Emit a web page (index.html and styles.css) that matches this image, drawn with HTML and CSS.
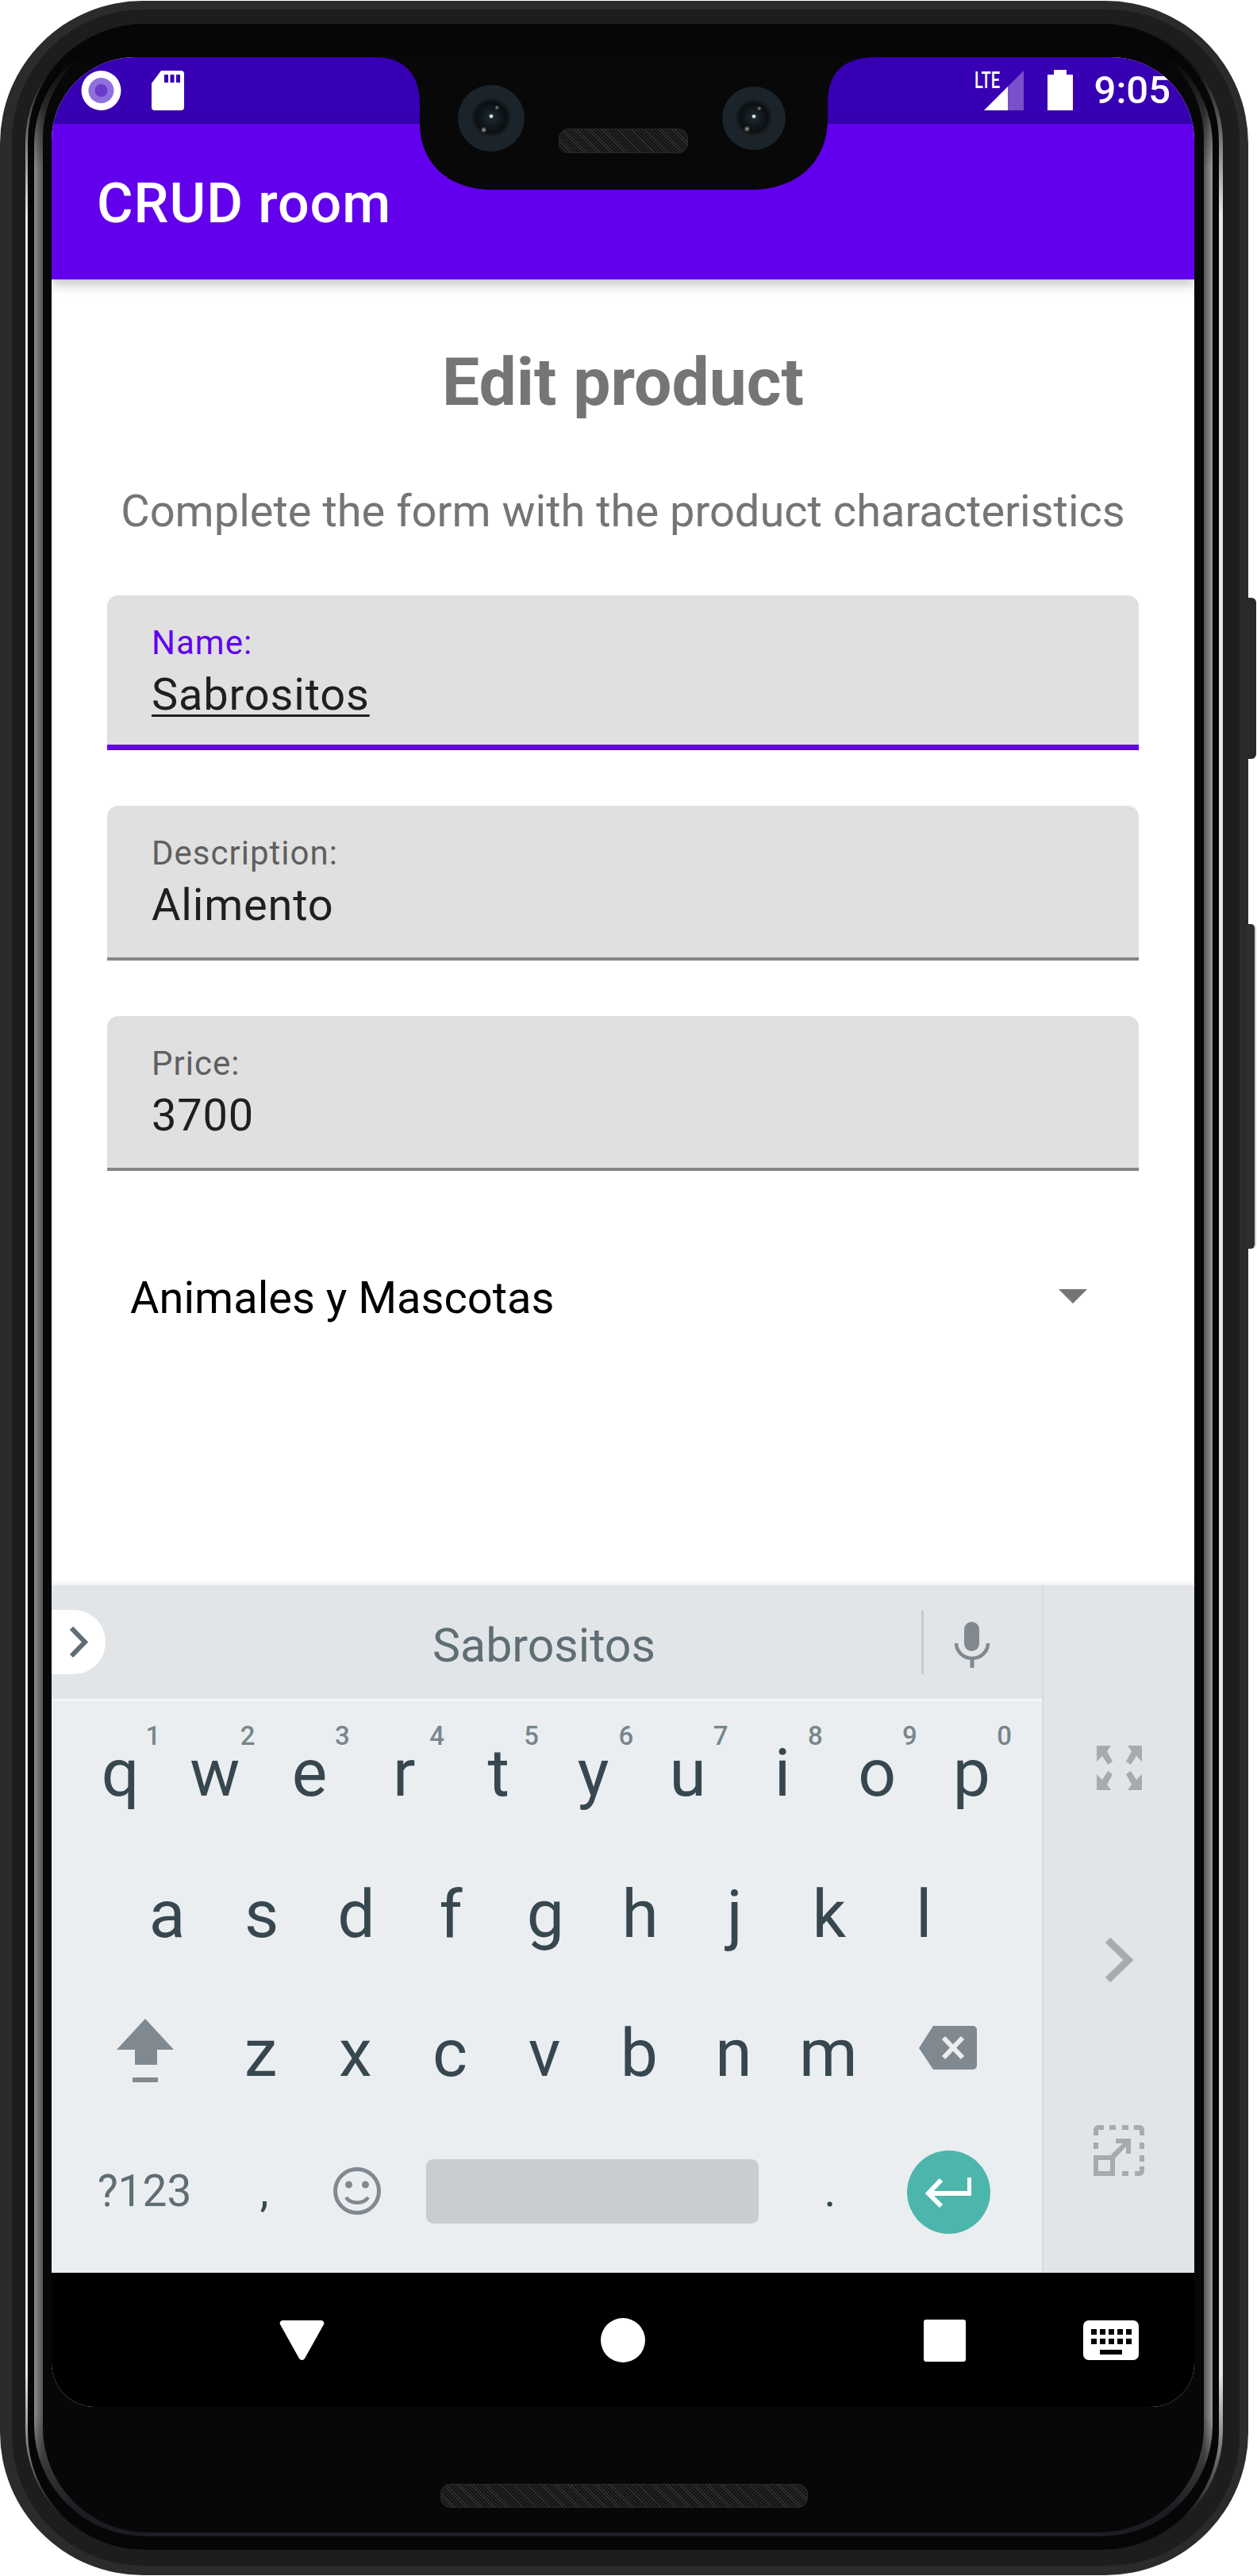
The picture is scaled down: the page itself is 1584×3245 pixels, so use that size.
FILE: index.html
```html
<!DOCTYPE html>
<html lang="en">
<head>
  <meta charset="utf-8">
  <title>CRUD room</title>
  <link rel="stylesheet" href="styles.css">
</head>
<body>
  <div class="phone">
    <div class="btn btn-power"></div>
    <div class="btn btn-volume"></div>
    <div class="ring-b">
      <div class="ring-c">
        <div class="ring-d">
          <div class="ring-e">
            <div class="ring-f">
              <div class="screen">
                <div class="statusbar">
                  <svg class="st-record" viewBox="0 0 50 50"><circle cx="25" cy="25" r="25" fill="#fff"/><circle cx="25" cy="25" r="16" fill="#8f70dc"/><circle cx="25" cy="25" r="8" fill="#6a3ccb"/></svg>
                  <svg class="st-sim" viewBox="0 0 41 50"><path d="M12 0H37a4 4 0 0 1 4 4V46a4 4 0 0 1-4 4H4a4 4 0 0 1-4-4V16Z" fill="#fff"/><path d="M16 5h5v10h-5zM23.500 5h5v10h-5zM31 5h5v10h-5z" fill="#3700b3"/></svg>
                  <div class="st-spacer"></div>
                  <svg class="st-signal" viewBox="0 0 62 50"><text x="0" y="22" class="st-lte" textLength="32" lengthAdjust="spacingAndGlyphs">LTE</text><path d="M42 50V20L62 0V50Z" fill="#7a50cc"/><path d="M12 50L42 20V50Z" fill="#fff"/></svg>
                  <svg class="st-battery" viewBox="0 0 32 51"><path d="M8 0H24V6H32V51H0V6H8Z" fill="#fff"/></svg>
                  <span class="st-time">9:05</span>
                </div>

                <div class="appbar">CRUD room</div>

                <div class="content">
                  <h1 class="page-title">Edit product</h1>
                  <p class="page-sub">Complete the form with the product characteristics</p>

                  <div class="field focused">
                    <div class="field-label">Name:</div>
                    <div class="field-value"><span class="composing">Sabrositos</span></div>
                  </div>
                  <div class="field">
                    <div class="field-label">Description:</div>
                    <div class="field-value">Alimento</div>
                  </div>
                  <div class="field">
                    <div class="field-label">Price:</div>
                    <div class="field-value">3700</div>
                  </div>

                  <div class="dropdown">
                    <span>Animales y Mascotas</span>
                    <div class="dropdown-arrow"></div>
                  </div>
                </div>

                <div class="keyboard">
                  <div class="kb-main">
                    <div class="suggest">
                      <div class="suggest-pill">
                        <svg width="24" height="39" viewBox="0 0 24 39"><path d="M3 2L20 19.500L3 37" fill="none" stroke="#5f6e75" stroke-width="6"/></svg>
                      </div>
                      <div class="suggest-word">Sabrositos</div>
                      <div class="suggest-div"></div>
                      <svg class="suggest-mic" width="44" height="58" viewBox="0 0 44 58"><rect x="12" y="0" width="19" height="37" rx="9.500" fill="#80898f"/><path d="M2 27a20 19 0 0 0 40 0" fill="none" stroke="#80898f" stroke-width="4.500"/><path d="M22 46V58" stroke="#80898f" stroke-width="5"/></svg>
                    </div>
                    <div class="keys">
                      <div class="key-row row-top">
                        <div class="key">q<span class="hint">1</span></div>
                        <div class="key">w<span class="hint">2</span></div>
                        <div class="key">e<span class="hint">3</span></div>
                        <div class="key">r<span class="hint">4</span></div>
                        <div class="key">t<span class="hint">5</span></div>
                        <div class="key">y<span class="hint">6</span></div>
                        <div class="key">u<span class="hint">7</span></div>
                        <div class="key">i<span class="hint">8</span></div>
                        <div class="key">o<span class="hint">9</span></div>
                        <div class="key">p<span class="hint">0</span></div>
                      </div>
                      <div class="key-row row-mid">
                        <div class="key">a</div>
                        <div class="key">s</div>
                        <div class="key">d</div>
                        <div class="key">f</div>
                        <div class="key">g</div>
                        <div class="key">h</div>
                        <div class="key">j</div>
                        <div class="key">k</div>
                        <div class="key">l</div>
                      </div>
                      <div class="key-row row-low">
                        <div class="key key-shift">
                          <svg width="72" height="80" viewBox="0 0 72 80"><path d="M36 0L72 39H51V58H23V39H0Z" fill="#80898f"/><rect x="20" y="74" width="32" height="6" fill="#80898f"/></svg>
                        </div>
                        <div class="key">z</div>
                        <div class="key">x</div>
                        <div class="key">c</div>
                        <div class="key">v</div>
                        <div class="key">b</div>
                        <div class="key">n</div>
                        <div class="key">m</div>
                        <div class="key key-del">
                          <svg width="73" height="55" viewBox="0 0 73 55"><path d="M18 0H68a5 5 0 0 1 5 5V50a5 5 0 0 1-5 5H18L0 28Z" fill="#80898f"/><path d="M31 15L55 40M55 15L31 40" stroke="#ebeef1" stroke-width="6"/></svg>
                        </div>
                      </div>
                      <div class="key-row row-bottom">
                        <div class="key key-sym">?123</div>
                        <div class="key key-comma">,</div>
                        <div class="key key-emoji">
                          <svg width="60" height="60" viewBox="0 0 60 60"><circle cx="30" cy="30" r="27.500" fill="none" stroke="#80898f" stroke-width="5"/><circle cx="19.500" cy="22" r="4.500" fill="#80898f"/><circle cx="40.500" cy="22" r="4.500" fill="#80898f"/><path d="M16 38a16 13 0 0 0 28 0" fill="none" stroke="#80898f" stroke-width="4.500"/></svg>
                        </div>
                        <div class="key-space"></div>
                        <div class="key key-period">.</div>
                        <div class="key key-enter">
                          <div class="enter-circle">
                            <svg width="58" height="38" viewBox="0 0 58 38"><path d="M56 0V20H5M20 3L4 20L20 36" fill="none" stroke="#fff" stroke-width="6"/></svg>
                          </div>
                        </div>
                      </div>
                    </div>
                  </div>
                  <div class="kb-side">
                    <svg class="side-expand" width="57" height="56" viewBox="0 0 57 56"><path d="M0 0H18L13 7L20 20L14 24L7 13L0 20ZM57 0H39L44 7L37 20L43 24L50 13L57 20ZM0 56H18L13 49L20 36L14 32L7 43L0 36ZM57 56H39L44 49L37 36L43 32L50 43L57 36Z" fill="#a5abae"/></svg>
                    <svg class="side-next" width="38" height="56" viewBox="0 0 38 56"><path d="M5 3L31 28L5 53" fill="none" stroke="#a5abae" stroke-width="9"/></svg>
                    <svg class="side-dock" width="64" height="64" viewBox="0 0 64 64"><g fill="#a5abae"><path d="M0 6a6 6 0 0 1 6-6h7v6H6v7H0zM20 0h8v6h-8zM36 0h8v6h-8zM51 0h7a6 6 0 0 1 6 6v7h-6V6h-7zM58 22h6v8h-6zM58 38h6v8h-6zM58 52h6v6a6 6 0 0 1-6 6h-6v-6h6zM36 58h8v6h-8zM0 22h6v8H0z"/><path d="M0 38h27v26H0zM6 44v14h15V44z" fill-rule="evenodd"/><path d="M28 17H47V36H41V27L27 42L22 37L37 23H28Z"/></g></svg>
                  </div>
                </div>

                <div class="navbar">
                  <svg class="nav-back" width="57" height="51" viewBox="0 0 57 51"><path d="M4 0H53a3.500 3.500 0 0 1 3 5L32 48a4 4 0 0 1-7 0L1 5a3.500 3.500 0 0 1 3-5Z" fill="#fff"/></svg>
                  <div class="nav-home"></div>
                  <div class="nav-recent"></div>
                  <svg class="nav-kb" width="70" height="50" viewBox="0 0 70 50"><rect width="70" height="50" rx="7" fill="#fff"/><path d="M10 11h7v7h-7zM21 11h7v7h-7zM32 11h7v7h-7zM43 11h7v7h-7zM54 11h7v7h-7zM10 23h7v7h-7zM21 23h7v7h-7zM32 23h7v7h-7zM43 23h7v7h-7zM54 23h7v7h-7zM21 37h28v6H21z" fill="#000"/></svg>
                </div>

                <svg class="notch" width="640" height="167" viewBox="465 72 640 167"><path d="M465 72H474C510 72 529 95 529 130V156C529 205 565 239 620 239H947C1003 239 1043 205 1043 150V130C1043 92 1062 72 1105 72Z" fill="#080808"/></svg>
                <div class="camera camera-left"><div class="lens"></div></div>
                <div class="camera camera-right"><div class="lens"></div></div>
                <div class="speaker speaker-top"></div>
              </div>
              <div class="speaker speaker-bottom"></div>
            </div>
          </div>
        </div>
      </div>
    </div>
  </div>
</body>
</html>
```

FILE: styles.css
```css
html, body {
  margin: 0;
  background: #fff;
}
body {
  font-family: Roboto, sans-serif;
  width: 1584px;
  height: 3245px;
  overflow: hidden;
}

/* device frame: one ring inside the other */
.phone {
  position: relative;
  box-sizing: border-box;
  width: 1573px;
  height: 3243px;
  margin-top: 1px;
  padding: 11px 11px 11px 15px;
  background: #2b2b2b;
  border-radius: 180px;
}
.btn {
  position: absolute;
  left: 1571px;
  width: 12px;
  background: #2a2a2a;
  border-radius: 0 6px 6px 0;
}
.btn-power {
  top: 752px;
  height: 203px;
}
.btn-volume {
  top: 1163px;
  height: 409px;
  background: #2e2e2e;
  border-right: 2px solid #cfcfcf;
  box-sizing: border-box;
}
.ring-b {
  padding: 18px 21px 20px 17px;
  background: #1d1d1d;
  border-radius: 165px;
}
.ring-c {
  padding: 0 5px 0 3px;
  background: linear-gradient(to bottom, #141414 60px, #e6e6e6 240px, #e6e6e6 2960px, #1a1a1a 3140px);
  border-radius: 150px;
}
.ring-d {
  padding: 12px 8px 17px 8px;
  background: #060606;
  border-radius: 148px;
}
.ring-e {
  padding: 0 11px 5px;
  background:
    linear-gradient(to bottom, #050505 30px, rgba(5,5,5,0) 170px, rgba(5,5,5,0) 3000px, #1c1c22 3120px),
    linear-gradient(to right, #8a8a8a, #555 11px, #555 calc(100% - 11px), #9a9a9a);
  border-radius: 140px;
}
.ring-f {
  padding: 30px 11px 0;
  height: 3118px;
  background: #070707;
  border-radius: 132px;
}

.screen {
  position: relative;
  display: flex;
  flex-direction: column;
  width: 1440px;
  height: 2960px;
  overflow: hidden;
  background: #fff;
  border-radius: 105px 105px 55px 55px;
}

/* status bar */
.statusbar {
  display: flex;
  align-items: flex-start;
  box-sizing: border-box;
  height: 84px;
  flex: none;
  padding: 17px 30px 0 37px;
  background: #3700b3;
}
.st-record {
  width: 51px;
  height: 50px;
}
.st-sim {
  width: 41px;
  height: 50px;
  margin-left: 38px;
}
.st-spacer {
  flex: 1;
}
.st-signal {
  width: 62px;
  height: 50px;
  overflow: visible;
}
.st-lte {
  font: 500 29px Roboto, sans-serif;
  fill: #fff;
}
.st-battery {
  width: 32px;
  height: 51px;
  margin: -1px 0 0 30px;
}
.st-time {
  margin: -4px 0 0 27px;
  font-size: 49px;
  line-height: 58px;
  font-weight: 500;
  color: #fff;
}

.appbar {
  position: relative;
  z-index: 2;
  box-sizing: border-box;
  height: 196px;
  flex: none;
  padding: 58px 0 0 57px;
  background: #6200ee;
  color: #fff;
  font-size: 70px;
  line-height: 84px;
  font-weight: 500;
  letter-spacing: .9px;
  box-shadow: 0 6px 14px rgba(0,0,0,.25);
}

/* form */
.content {
  flex: 1;
  padding: 81px 70px 0;
}
.page-title {
  margin: 0;
  font-size: 84px;
  line-height: 98px;
  font-weight: 700;
  color: #757575;
  text-align: center;
}
.page-sub {
  margin: 80px 0 0;
  font-size: 56px;
  line-height: 66px;
  color: #757575;
  text-align: center;
  white-space: nowrap;
}
.field {
  box-sizing: border-box;
  height: 195px;
  margin-top: 70px;
  padding: 35px 56px 0;
  background: #e0e0e0;
  border-bottom: 4px solid #858585;
  border-radius: 14px 14px 0 0;
}
.page-sub + .field {
  margin-top: 73px;
}
.field.focused {
  border-bottom: 7px solid #6200ee;
}
.field-label {
  font-size: 42px;
  line-height: 50px;
  letter-spacing: 1px;
  color: #5f5f5f;
}
.focused .field-label {
  color: #6200ee;
}
.field-value {
  margin-top: 7px;
  font-size: 56px;
  line-height: 66px;
  letter-spacing: .8px;
  color: #1f1f1f;
}
.composing {
  text-decoration: underline;
  text-decoration-thickness: 3px;
  text-underline-offset: 6px;
  text-decoration-skip-ink: none;
}
.dropdown {
  display: flex;
  align-items: center;
  justify-content: space-between;
  height: 66px;
  margin-top: 127px;
  padding: 0 65px 0 29px;
  font-size: 56px;
  line-height: 66px;
  color: #000;
}
.dropdown-arrow {
  width: 0;
  height: 0;
  border-left: 18px solid transparent;
  border-right: 18px solid transparent;
  border-top: 18px solid #757575;
  margin-top: -4px;
}

/* keyboard */
.keyboard {
  position: relative;
  z-index: 1;
  display: flex;
  height: 866px;
  flex: none;
  background: #ebeef1;
  box-shadow: 0 -2px 6px rgba(0,0,0,.08);
}
.kb-main {
  width: 1248px;
  flex: none;
}
.suggest {
  display: flex;
  align-items: center;
  box-sizing: border-box;
  height: 146px;
  background: #e2e5e8;
  border-bottom: 3px solid #f6f7f8;
}
.suggest-pill {
  display: flex;
  align-items: center;
  box-sizing: border-box;
  width: 68px;
  height: 81px;
  padding-left: 22px;
  background: #fff;
  border-radius: 0 40px 40px 0;
}
.suggest-word {
  flex: 1;
  padding: 8px 0 0 77px;
  font-size: 59px;
  line-height: 66px;
  color: #5f6e75;
  text-align: center;
}
.suggest-div {
  width: 3px;
  height: 80px;
  background: #c4c9cc;
}
.suggest-mic {
  margin: 6px 66px 0 39px;
}
.keys {
  padding-top: 3px;
}
.key-row {
  display: flex;
  height: 175.500px;
}
.row-top {
  padding-left: 27px;
}
.row-mid {
  padding-left: 86px;
}
.row-low {
  padding-left: 31px;
}
.row-bottom {
  padding-left: 31px;
  align-items: center;
}
.key {
  position: relative;
  display: flex;
  align-items: center;
  justify-content: center;
  box-sizing: border-box;
  width: 119.200px;
  height: 175px;
  flex: none;
  font-size: 84px;
  line-height: 175px;
  color: #37474f;
}
.row-mid .key, .row-low .key {
  padding-top: 4px;
}
.hint {
  position: absolute;
  top: 24px;
  left: 91px;
  width: 20px;
  font-size: 33px;
  line-height: 33px;
  font-weight: 500;
  color: #78868c;
  text-align: center;
}
.key-shift {
  width: 173px;
  padding-bottom: 8px;
}
.key-del {
  width: 182px;
  padding-bottom: 14px;
}
.key-sym {
  width: 172px;
  font-size: 55px;
  color: #5f6e75;
}
.key-comma {
  width: 130px;
  font-size: 56px;
}
.key-emoji {
  width: 104px;
}
.key-space {
  width: 419px;
  height: 81px;
  margin-left: 35px;
  background: #c9cdd0;
  border-radius: 9px;
}
.key-period {
  width: 180px;
  font-size: 56px;
}
.key-enter {
  width: 118px;
}
.enter-circle {
  display: flex;
  align-items: center;
  justify-content: center;
  width: 105px;
  height: 105px;
  margin-top: 3px;
  background: #4db6ac;
  border-radius: 50%;
}
.kb-side {
  display: flex;
  flex-direction: column;
  align-items: center;
  flex: 1;
  padding-top: 202px;
  background: #e2e5e8;
  border-left: 2px solid #d8dbde;
  box-sizing: border-box;
}
.side-next {
  margin-top: 186px;
}
.side-dock {
  margin-top: 180px;
}

/* navigation bar */
.navbar {
  display: flex;
  align-items: flex-start;
  height: 169px;
  flex: none;
  padding-top: 60px;
  box-sizing: border-box;
  background: #000;
}
.nav-back {
  margin-left: 287px;
}
.nav-home {
  width: 56px;
  height: 56px;
  margin-left: 348px;
  background: #fff;
  border-radius: 50%;
  margin-top: -3px;
}
.nav-recent {
  width: 53px;
  height: 53px;
  margin-left: 351px;
  background: #fff;
  border-radius: 3px;
  margin-top: -1px;
}
.nav-kb {
  margin-left: 148px;
}

/* things lying over the screen */
.notch {
  position: absolute;
  top: 0;
  left: 400px;
  z-index: 3;
}
.camera {
  position: absolute;
  z-index: 4;
  top: 35px;
  display: flex;
  align-items: center;
  justify-content: center;
  width: 84px;
  height: 84px;
  background: #1a242a;
  border-radius: 50%;
}
.camera-left {
  left: 512px;
}
.camera-right {
  left: 845px;
  width: 80px;
  height: 80px;
  top: 37px;
}
.lens {
  width: 52px;
  height: 52px;
  background:
    radial-gradient(circle at 50% 45%, #dfe6e8 0, #dfe6e8 1.5px, transparent 3px),
    radial-gradient(circle at 32% 78%, #a8a29c 0, transparent 4px),
    radial-gradient(circle at 64% 24%, #8b8f90 0, transparent 3px),
    radial-gradient(circle at 50% 48%, #1e2c34 0, #0b0f12 50%, #2b3237 82%, #4a5054 100%);
  border-radius: 50%;
}
.camera-right .lens {
  width: 48px;
  height: 48px;
}
.speaker {
  background-color: #1e1e1e;
  background-image: repeating-linear-gradient(45deg, #333 0, #333 1px, #141414 1px, #141414 3px);
  border: 1px solid #2a2a2a;
  border-radius: 12px;
  box-sizing: border-box;
}
.speaker-top {
  position: absolute;
  z-index: 4;
  top: 90px;
  left: 639px;
  width: 163px;
  height: 31px;
}
.speaker-bottom {
  width: 463px;
  height: 30px;
  margin: 97px 0 0 490px;
}
```
